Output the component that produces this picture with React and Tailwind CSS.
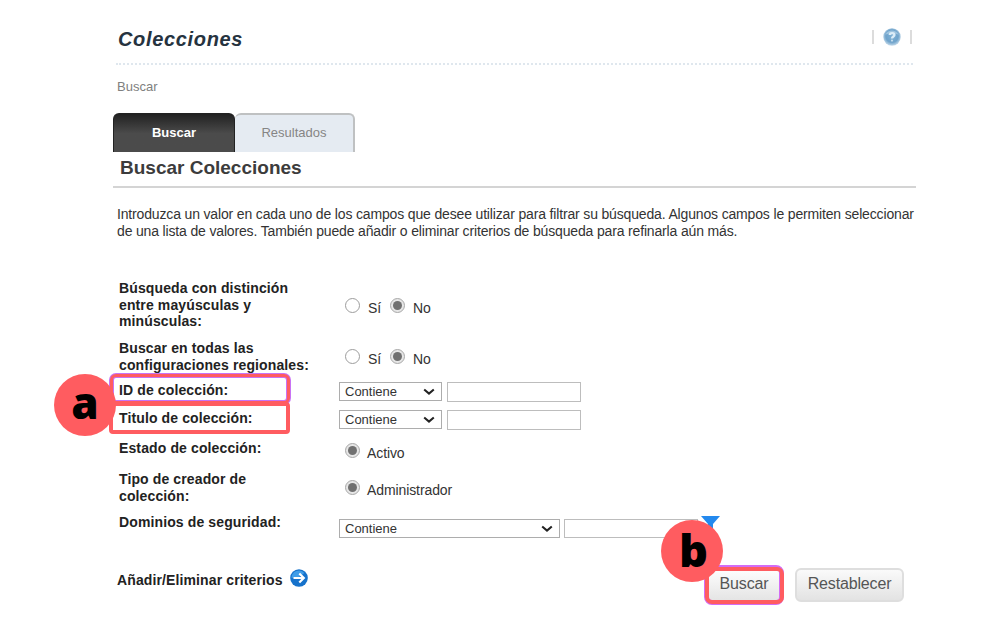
import React from "react";

function Radio({ checked = false }) {
  return (
    <span
      className={
        "flex size-[15px] shrink-0 items-center justify-center rounded-full border-[1.5px] " +
        (checked ? "border-[#a9a9a9] bg-[#e6e6e6]" : "border-[#9d9d9d] bg-white")
      }
    >
      {checked && <span className="size-[9px] rounded-full bg-[#707070]" />}
    </span>
  );
}

function YesNo({ className }) {
  return (
    <div className={"flex items-center pl-[6px] " + className}>
      <Radio />
      <span className="w-[30px] pt-[5px] pl-[8px] text-[14px] leading-4 tracking-[-0.2px]">Sí</span>
      <Radio checked />
      <span className="pt-[5px] pl-[8px] text-[14px] leading-4 tracking-[-0.2px]">No</span>
    </div>
  );
}

function Select({ className }) {
  return (
    <div className={"flex h-[19px] shrink-0 items-center justify-between border border-[#adadad] bg-white pr-[6px] pl-[5px] " + className}>
      <span className="text-[13px] leading-4 text-[#333]">Contiene</span>
      <svg width="12" height="8" viewBox="0 0 12 8" fill="none" stroke="#222" strokeWidth="2">
        <path d="M1.2 1.4 6 5.6l4.8-4.2" />
      </svg>
    </div>
  );
}

function Label({ lines }) {
  return (
    <div className="flex w-[226px] shrink-0 flex-col pl-[6px] text-[14px] leading-[16.5px] font-bold tracking-[0.12px] whitespace-nowrap text-[#222]">
      {lines.map((l) => (
        <span key={l}>{l}</span>
      ))}
    </div>
  );
}

function TextCriterion() {
  return (
    <div className="mt-[3px] flex items-center">
      <Select className="w-[103px]" />
      <span className="ml-[5px] h-[20px] w-[134px] border border-[#bdbdbd]" />
    </div>
  );
}

export default function App() {
  return (
    <div className="relative h-[625px] w-[1000px] overflow-hidden bg-white font-['Liberation_Sans',Arial,sans-serif] text-[#333]">
      <main className="ml-[113px] flex w-[803px] flex-col">
        <header className="ml-[3px] flex h-[65px] w-[797px] items-start justify-between border-b-2 border-dotted border-[#dfe7ee]">
          <h1 className="pt-[27px] pl-[2px] text-[20px] leading-6 font-bold tracking-[0.66px] text-[#26333f] italic">Colecciones</h1>
          <div className="mt-[28px] mr-[1px] flex items-center">
            <span className="mr-[9px] h-[14px] w-[2px] bg-[#dcdcdc]" />
            <svg width="18" height="18" viewBox="0 0 18 18" className="mr-[9px]">
              <defs>
                <radialGradient id="help" cx="50%" cy="45%" r="55%">
                  <stop offset="0" stopColor="#80b2d6" />
                  <stop offset=".65" stopColor="#6fa3cb" />
                  <stop offset="1" stopColor="#c2d9ea" />
                </radialGradient>
              </defs>
              <circle cx="9" cy="9" r="8.7" fill="url(#help)" />
              <path d="M2.4 6.7C5 1.2 13 1.2 15.6 6.7 13 5 5 5 2.4 6.7Z" fill="#aacce4" opacity=".8" />
              <path d="M6.800 7.1c0-2.600 4.600-2.600 4.600 0C11.400 8.500 9 8.700 9 10.600" fill="none" stroke="#dcecf7" strokeWidth="2.400" />
              <circle cx="9" cy="12.600" r="1.100" fill="#c4dced" />
            </svg>
            <span className="h-[14px] w-[2px] bg-[#dcdcdc]" />
          </div>
        </header>
        <nav className="mt-[13px] h-[35px] pl-[4px] text-[13px] leading-[18px] text-[#808080]">Buscar</nav>
        <div className="flex h-[39px]">
          <div className="flex w-[122px] items-center justify-center rounded-t-[6px] border-x border-t-2 border-[#222] bg-linear-to-b from-[#242424] to-[#4b4b4b] to-50% pb-[2px] text-[13px] font-bold text-white">Buscar</div>
          <div className="flex w-[120px] items-center justify-center rounded-t-[6px] border-t-2 border-r-2 border-[#bfc1c2] bg-[#e5ebf2] pb-[2px] text-[13px] text-[#858585]">Resultados</div>
        </div>
        <h2 className="h-[36px] border-b-2 border-[#d4d4d4] pt-[4px] pl-[7px] text-[19px] leading-6 font-bold text-[#3c3c3c]">Buscar Colecciones</h2>
        <p className="mt-[18px] h-[74px] pl-[4px] text-[14px] leading-[17px] tracking-[-0.158px] whitespace-nowrap">
          Introduzca un valor en cada uno de los campos que desee utilizar para filtrar su búsqueda. Algunos campos le permiten seleccionar
          <br />
          de una lista de valores. También puede añadir o eliminar criterios de búsqueda para refinarla aún más.
        </p>
        <section className="flex flex-col">
          <div className="flex h-[60px]">
            <Label lines={["Búsqueda con distinción", "entre mayúsculas y", "minúsculas:"]} />
            <YesNo className="h-[50px]" />
          </div>
          <div className="flex h-[36px]">
            <Label lines={["Buscar en todas las", "configuraciones regionales:"]} />
            <YesNo className="h-[32px]" />
          </div>
          <div className="flex h-[28px] items-center">
            <Label lines={["ID de colección:"]} />
            <TextCriterion />
          </div>
          <div className="flex h-[28px] items-center">
            <Label lines={["Titulo de colección:"]} />
            <TextCriterion />
          </div>
          <div className="flex h-[39px] pt-[8px]">
            <Label lines={["Estado de colección:"]} />
            <div className="flex h-[20px] items-center pl-[6px]">
              <Radio checked />
              <span className="pt-[5px] pl-[7px] text-[14px] leading-4 tracking-[-0.1px]">Activo</span>
            </div>
          </div>
          <div className="flex h-[43px]">
            <Label lines={["Tipo de creador de", "colección:"]} />
            <div className="flex h-[33px] items-center pl-[6px]">
              <Radio checked />
              <span className="pt-[5px] pl-[7px] text-[14px] leading-4 tracking-[-0.1px]">Administrador</span>
            </div>
          </div>
          <div className="flex h-[48px]">
            <Label lines={["Dominios de seguridad:"]} />
            <div className="mt-[5px] flex h-[20px]">
              <Select className="w-[221px]" />
              <span className="ml-[4px] h-[19px] w-[134px] border border-[#bdbdbd]" />
              <svg width="20" height="18" viewBox="0 0 20 18" className="-mt-[3px] ml-[3px]">
                <path d="M0 0h19l-7 8v8H7V8Z" fill="#2389ee" />
              </svg>
            </div>
          </div>
          <div className="flex h-[44px] justify-between">
            <div className="flex h-[36px] items-start pt-[8px] pl-[4px] text-[14px] leading-5 font-bold tracking-[0.12px] text-[#222]">
              Añadir/Eliminar criterios
              <svg width="18" height="18" viewBox="0 0 18 18" className="-mt-px ml-[7px]">
                <circle cx="9" cy="9" r="8.800" fill="#1672cb" />
                <path d="M1.500 9a7.500 7.500 0 0 1 13-5L9 8Z" fill="#3f9de8" />
                <path d="M3.500 9h10M9.300 4.500 13.800 9l-4.500 4.500" fill="none" stroke="#fff" strokeWidth="2.200" />
              </svg>
            </div>
            <div className="mt-[6px] mr-[12px] flex h-[34px] gap-[16px] text-[16px] tracking-[-0.15px] text-[#555]">
              <button className="w-[70px] rounded-[5px] bg-linear-to-b from-white to-[#e3e3e3] pb-[2px]">Buscar</button>
              <button className="w-[109px] rounded-[6px] border-2 border-[#dedede] bg-linear-to-b from-[#fafafa] to-[#e3e3e3] pb-[2px]">Restablecer</button>
            </div>
          </div>
        </section>
      </main>
      <div className="absolute top-[373px] left-[109px] h-[32px] w-[182px] rounded-[7px] border-[5px] border-[#c873f5]" />
      <div className="absolute top-[374px] left-[110px] h-[30px] w-[180px] rounded-[6px] border-[3px] border-[#ff5c60]" />
      <div className="absolute top-[402px] left-[109px] h-[32px] w-[181px] rounded-[4px] border-4 border-[#ff5c60]" />
      <div className="absolute top-[565px] left-[704px] h-[40px] w-[80px] rounded-[8px] border-[5px] border-[#d26cf5]" />
      <div className="absolute top-[567px] left-[705px] h-[37px] w-[79px] rounded-[7px] border-4 border-[#ff5c60]" />
      <div className="absolute top-[374px] left-[54px] flex size-[62px] items-center justify-center rounded-full bg-[#ff5c60] font-['Open_Sans',sans-serif] text-[44px] leading-none font-extrabold text-black">
        <span className="-mt-[6px]">a</span>
      </div>
      <div className="absolute top-[520px] left-[661px] flex size-[62px] items-center justify-center rounded-full bg-[#ff5c60] font-['Open_Sans',sans-serif] text-[45px] leading-none font-extrabold text-black">
        <span className="-mt-[3px] ml-[3px]">b</span>
      </div>
    </div>
  );
}
